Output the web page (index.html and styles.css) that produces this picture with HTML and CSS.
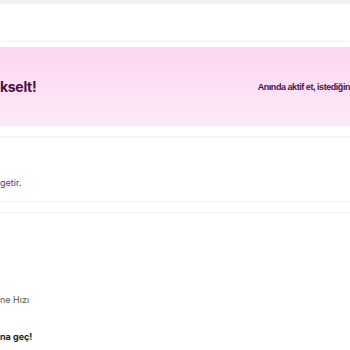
FILE: index.html
```html
<!DOCTYPE html>
<html lang="tr">
<head>
    <meta charset="UTF-8">
    <meta name="viewport" content="width=device-width, initial-scale=1.0">
    <title>Premium</title>
    <link rel="stylesheet" href="styles.css">
</head>
<body>
    <div class="topbar"></div>
    <header class="header"></header>

    <!-- Premium banner -->
    <section class="promo">
        <h2 class="promo-title">kselt!</h2>
        <p class="promo-sub">Anında aktif et, istediğin</p>
    </section>
    <div class="promo-line"></div>

    <div class="info">
        <p class="info-text">getir.</p>
    </div>
    <div class="divider"></div>
    <div class="divider"></div>

    <div class="features">
        <p class="feature-label">ne Hızı</p>
        <p class="feature-cta">na geç!</p>
    </div>
</body>
</html>
```

FILE: styles.css
```css
/* Genel */
body {
    font-family: Inter, "Noto Sans", sans-serif;
    background-color: #fff;
    margin: 0;
    padding: 0;
    width: 350px;
    height: 350px;
    overflow: hidden;
}

p, h2 {
    margin: 0;
}

.topbar {
    height: 4px;
    background-color: #f3f3f3;
}

.header {
    height: 36px;
    background-color: #fff;
    box-shadow: 0 3px 4px rgba(0, 0, 0, 0.03);
}

/* Banner */
.promo {
    margin-top: 7px;
    height: 79px;
    background: linear-gradient(to bottom, #fdd6f3, #fdeaf8);
    display: flex;
    align-items: center;
    box-shadow: 0 4px 6px rgba(255, 255, 255, 0.9);
}

.promo-title {
    font-size: 14px;
    font-weight: 700;
    color: #4b0f44;
    letter-spacing: -0.3px;
}

.promo-sub {
    margin-left: auto;
    white-space: nowrap;
    font-family: "Liberation Sans", Arial, sans-serif;
    font-size: 9px;
    font-weight: 700;
    letter-spacing: -0.45px;
    color: #4b0f4f;
    padding-top: 1px;
}

.promo-line {
    margin-top: 10px;
    height: 2px;
    background-color: #f4f4f4;
}

/* Bilgi */
.info {
    padding: 39px 0 0;
    height: 24px;
}

.info-text {
    font-size: 9px;
    color: #6d2f6d;
}

.divider {
    height: 1px;
    background-color: #f1f1f1;
    margin-bottom: 10px;
}

/* Özellikler */
.features {
    padding-top: 71px;
}

.feature-label {
    font-size: 9px;
    color: #555;
}

.feature-cta {
    margin-top: 26px;
    font-size: 9px;
    font-weight: 700;
    color: #1a1a1a;
}
```
